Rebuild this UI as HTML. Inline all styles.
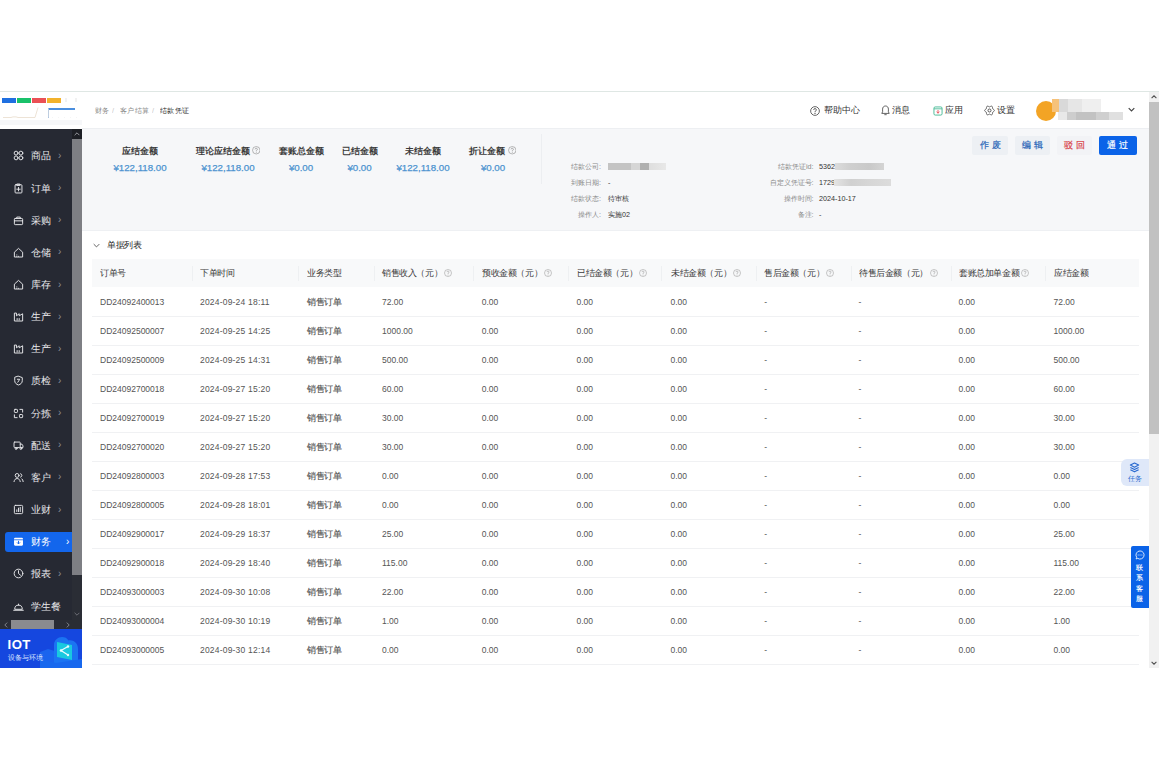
<!DOCTYPE html>
<html><head><meta charset="utf-8">
<style>
*{margin:0;padding:0;box-sizing:border-box}
html,body{width:1159px;height:759px;overflow:hidden;background:#fff;font-family:"Liberation Sans",sans-serif}
.abs{position:absolute}
#app{position:absolute;left:0;top:0;width:1159px;height:668px;overflow:hidden;background:transparent}
#topline{position:absolute;left:0;top:91px;width:1159px;height:1px;background:#dfe7e4}
#logo{position:absolute;left:0;top:92px;width:82px;height:37px;background:#fff}
#side{position:absolute;left:0;top:129px;width:82px;height:500px;background:#262933;overflow:hidden}
#sbtrack{position:absolute;left:72px;top:0;width:10px;height:491px;background:#2a2d35}
#hdr{position:absolute;left:82px;top:92px;width:1067px;height:37px;background:#fff;border-bottom:1px solid #edeff2}
#sum{position:absolute;left:82px;top:129px;width:1067px;height:102px;background:#f6f7f9;border-bottom:1px solid #eef0f3}
#vscroll{position:absolute;left:1149px;top:92px;width:10px;height:576px;background:#f1f1f1}
.th{position:absolute;top:9px;font-size:9px;transform:scale(.955);transform-origin:0 50%;color:#383838;white-space:nowrap;line-height:10px}
.sep{position:absolute;top:7px;width:1px;height:15px;background:#eef0f2}
#thead{position:absolute;left:92.4px;top:258.6px;width:1046.6px;height:28.6px;background:#f8f9fa}
#thead .th, #thead .sep{margin-left:-92.4px}
#thead svg{margin-left:-92.4px;margin-top:-258.6px}
.tr{position:absolute;left:92.4px;width:1046.6px;height:30px;border-bottom:1px solid #f0f1f3}
.td{position:absolute;margin-left:-92.4px;top:10px;font-size:8.5px;color:#555;white-space:nowrap;line-height:10px}
.si{position:absolute;left:0;width:72px;height:20px;color:#e6e7ea;font-size:9.8px}
.si.act{left:5px;width:67px;background:#1366ec;border-radius:3px 0 0 3px;color:#fff}
.st{position:absolute;top:4.5px;line-height:12px;white-space:nowrap}
.si.act .st{margin-left:-5px}
.chev{position:absolute;top:4px;font-size:10px;color:#8a8d95;line-height:12px}
.si.act .chev{color:#fff;margin-left:-5px}
.ic{position:absolute;top:4.5px;color:#e6e7ea}
.si.act .ic{margin-left:-5px;color:#fff}
.lbl{position:absolute;font-size:7.2px;color:#8a8a8a;white-space:nowrap;line-height:9px;text-align:right}
.val{position:absolute;font-size:7.2px;color:#333;white-space:nowrap;line-height:9px}
.blur{position:absolute;background:#d0d0d0}
.btn{position:absolute;top:7px;height:19px;font-size:8.6px;line-height:19px;text-align:center;letter-spacing:3px;text-indent:3px;border-radius:2px;-webkit-text-stroke:.2px currentColor}
.sumt{position:absolute;top:17.2px;font-size:8.5px;font-weight:bold;color:#3a3a3a;white-space:nowrap;line-height:10px;transform:translateX(-50%)}
.sumv{position:absolute;top:33px;font-size:9.7px;color:#4d93d0;-webkit-text-stroke:.25px #4d93d0;white-space:nowrap;line-height:11px;transform:translateX(-50%)}
.bc{position:absolute;top:14px;font-size:8px;transform:scale(.92);transform-origin:0 50%;line-height:9px;white-space:nowrap}
.hi{position:absolute;top:13px;font-size:8.9px;color:#333;white-space:nowrap;line-height:10px}
</style></head><body>
<div id="topline"></div><div id="app">
  <div id="logo">
    <i class="abs" style="left:2px;top:6px;width:14px;height:5px;background:#1f6fe0"></i>
    <i class="abs" style="left:17px;top:6px;width:14px;height:5px;background:#19c16a"></i>
    <i class="abs" style="left:32px;top:6px;width:13.5px;height:5px;background:#ea5055"></i>
    <i class="abs" style="left:46.5px;top:6px;width:14px;height:5px;background:#f2b22c"></i>
    <i class="abs" style="left:48px;top:15.5px;width:27px;height:2px;background:#4a8ede"></i>
    <i class="abs" style="left:48px;top:15.5px;width:1px;height:10px;background:#9ab8e0"></i>
    <svg class="abs" style="left:0;top:0" width="82" height="30" viewBox="0 0 82 30"><path d="M3 25.5h8l2-.6h3l2 .6h17l3-10" fill="none" stroke="#e8dccb" stroke-width=".8"/><path d="M48.5 17v8.5" stroke="#c9d3e0" stroke-width=".8"/><path d="M52 25.5h26" stroke="#eeeeee" stroke-width=".6" stroke-dasharray="1 5"/><path d="M66 6v4M76 6v4" stroke="#e3e3e3" stroke-width="1"/></svg>
    <i class="abs" style="left:0;top:28px;width:82px;height:5px;background:#f6f7f9"></i>
  </div>
  <div id="side">
    <div id="sbtrack">
      <i class="abs" style="left:0;top:0;width:10px;height:10px;background:#1d1f25"></i>
      <i class="abs" style="left:0;top:10px;width:10px;height:436px;background:#7e7f84"></i>
      <svg class="abs" style="left:2px;top:3px" width="6" height="4" viewBox="0 0 10 6"><path d="M1 5l4-4 4 4" fill="none" stroke="#9a9ca2" stroke-width="1.6"/></svg>
      <svg class="abs" style="left:2px;top:483px" width="6" height="4" viewBox="0 0 10 6"><path d="M1 1l4 4 4-4" fill="none" stroke="#6f7178" stroke-width="1.6"/></svg>
    </div>
    <div class="si" style="top:16.900000000000006px"><svg class="ic" style="left:13px" width="11" height="11" viewBox="0 0 16 16"><g fill="none" stroke="currentColor" stroke-width="1.4" stroke-linecap="round" stroke-linejoin="round"><circle cx="4.5" cy="4.5" r="2.8"/><circle cx="11.5" cy="4.5" r="2.8"/><circle cx="4.5" cy="11.5" r="2.8"/><circle cx="11.5" cy="11.5" r="2.8"/></g></svg><span class="st" style="left:31px">商品</span><span class="chev" style="left:58px">›</span></div><div class="si" style="top:49.05000000000001px"><svg class="ic" style="left:13px" width="11" height="11" viewBox="0 0 16 16"><g fill="none" stroke="currentColor" stroke-width="1.4" stroke-linecap="round" stroke-linejoin="round"><rect x="3" y="2.5" width="10" height="12" rx="1.2"/><path d="M6 1.5h4v2H6z"/><path d="M8 6.5v5M5.5 9h5"/></g></svg><span class="st" style="left:31px">订单</span><span class="chev" style="left:58px">›</span></div><div class="si" style="top:81.19999999999999px"><svg class="ic" style="left:13px" width="11" height="11" viewBox="0 0 16 16"><g fill="none" stroke="currentColor" stroke-width="1.4" stroke-linecap="round" stroke-linejoin="round"><rect x="2" y="5" width="12" height="9" rx="1.2"/><path d="M5.5 5V3h5v2M2 8.5h12"/></g></svg><span class="st" style="left:31px">采购</span><span class="chev" style="left:58px">›</span></div><div class="si" style="top:113.35px"><svg class="ic" style="left:13px" width="11" height="11" viewBox="0 0 16 16"><g fill="none" stroke="currentColor" stroke-width="1.4" stroke-linecap="round" stroke-linejoin="round"><path d="M2 14V7.5L8 2l6 5.5V14z"/><path d="M5.5 11.5v.1M5.5 13.5v.1M8 13.5v.1"/></g></svg><span class="st" style="left:31px">仓储</span><span class="chev" style="left:58px">›</span></div><div class="si" style="top:145.5px"><svg class="ic" style="left:13px" width="11" height="11" viewBox="0 0 16 16"><g fill="none" stroke="currentColor" stroke-width="1.4" stroke-linecap="round" stroke-linejoin="round"><path d="M2 14V7.5L8 2l6 5.5V14z"/><path d="M5.5 11.5v.1M5.5 13.5v.1M8 13.5v.1"/></g></svg><span class="st" style="left:31px">库存</span><span class="chev" style="left:58px">›</span></div><div class="si" style="top:177.64999999999998px"><svg class="ic" style="left:13px" width="11" height="11" viewBox="0 0 16 16"><g fill="none" stroke="currentColor" stroke-width="1.4" stroke-linecap="round" stroke-linejoin="round"><path d="M2 14V3h3v4l4-3v3l5-3v10z"/><path d="M6 11v2M9 11v2"/></g></svg><span class="st" style="left:31px">生产</span><span class="chev" style="left:58px">›</span></div><div class="si" style="top:209.79999999999995px"><svg class="ic" style="left:13px" width="11" height="11" viewBox="0 0 16 16"><g fill="none" stroke="currentColor" stroke-width="1.4" stroke-linecap="round" stroke-linejoin="round"><path d="M2 14V3h3v4l4-3v3l5-3v10z"/><path d="M6 11v2M9 11v2"/></g></svg><span class="st" style="left:31px">生产</span><span class="chev" style="left:58px">›</span></div><div class="si" style="top:241.95px"><svg class="ic" style="left:13px" width="11" height="11" viewBox="0 0 16 16"><g fill="none" stroke="currentColor" stroke-width="1.4" stroke-linecap="round" stroke-linejoin="round"><path d="M8 1.8l5.5 2v4.5c0 3.2-2.4 5.3-5.5 6.2C4.9 13.6 2.5 11.5 2.5 8.3V3.8z"/><path d="M6.3 6.2h3.5L7 10.5"/></g></svg><span class="st" style="left:31px">质检</span><span class="chev" style="left:58px">›</span></div><div class="si" style="top:274.1px"><svg class="ic" style="left:13px" width="11" height="11" viewBox="0 0 16 16"><g fill="none" stroke="currentColor" stroke-width="1.4" stroke-linecap="round" stroke-linejoin="round"><rect x="2" y="2" width="4.5" height="4.5" rx="1"/><rect x="9.5" y="9.5" width="4.5" height="4.5" rx="1"/><path d="M2 10v4h4M14 6V2h-4"/></g></svg><span class="st" style="left:31px">分拣</span><span class="chev" style="left:58px">›</span></div><div class="si" style="top:306.25px"><svg class="ic" style="left:13px" width="11" height="11" viewBox="0 0 16 16"><g fill="none" stroke="currentColor" stroke-width="1.4" stroke-linecap="round" stroke-linejoin="round"><rect x="1.5" y="3" width="9" height="8" rx="1"/><path d="M10.5 6h2.5l1.5 2.5V11h-4"/><circle cx="4.5" cy="12.5" r="1.3"/><circle cx="11.5" cy="12.5" r="1.3"/></g></svg><span class="st" style="left:31px">配送</span><span class="chev" style="left:58px">›</span></div><div class="si" style="top:338.4px"><svg class="ic" style="left:13px" width="11" height="11" viewBox="0 0 16 16"><g fill="none" stroke="currentColor" stroke-width="1.4" stroke-linecap="round" stroke-linejoin="round"><circle cx="6" cy="5" r="2.8"/><path d="M1.5 14c.5-3 2.2-4.5 4.5-4.5s4 1.5 4.5 4.5"/><path d="M11 2.5a2.6 2.6 0 0 1 0 5M13 10c1 .8 1.6 2.2 1.8 4"/></g></svg><span class="st" style="left:31px">客户</span><span class="chev" style="left:58px">›</span></div><div class="si" style="top:370.54999999999995px"><svg class="ic" style="left:13px" width="11" height="11" viewBox="0 0 16 16"><g fill="none" stroke="currentColor" stroke-width="1.4" stroke-linecap="round" stroke-linejoin="round"><rect x="2" y="2" width="12" height="12" rx="1.5"/><path d="M5.5 11V8.5M8 11V6M10.5 11V5"/></g></svg><span class="st" style="left:31px">业财</span><span class="chev" style="left:58px">›</span></div><div class="si act" style="top:402.69999999999993px"><svg class="ic" style="left:13px" width="11" height="11" viewBox="0 0 16 16"><g><rect x="1.5" y="2.5" width="13" height="11.5" rx="1.5" fill="#fff"/><path d="M1.5 5.5h13" stroke="#1366ec" stroke-width="1.2"/><path d="M8 7v4.5M5.8 9.3L8 11.5l2.2-2.2" fill="none" stroke="#1366ec" stroke-width="1.4"/></g></svg><span class="st" style="left:31px">财务</span><span class="chev" style="left:66px">›</span></div><div class="si" style="top:434.85px"><svg class="ic" style="left:13px" width="11" height="11" viewBox="0 0 16 16"><g fill="none" stroke="currentColor" stroke-width="1.4" stroke-linecap="round" stroke-linejoin="round"><circle cx="8" cy="8" r="6.3"/><path d="M8 4v4l3 2.5"/></g></svg><span class="st" style="left:31px">报表</span><span class="chev" style="left:58px">›</span></div><div class="si" style="top:467.0px"><svg class="ic" style="left:13px" width="11" height="11" viewBox="0 0 16 16"><g fill="none" stroke="currentColor" stroke-width="1.4" stroke-linecap="round" stroke-linejoin="round"><path d="M2.5 11.5a5.5 5.5 0 0 1 11 0z"/><path d="M1 13.5h14M8 4.5v1.5"/></g></svg><span class="st" style="left:31px">学生餐</span></div>
    <i class="abs" style="left:0;top:491px;width:82px;height:10px;background:#2a2d35"></i>
    <i class="abs" style="left:11px;top:491px;width:43px;height:9px;background:#8a8b8f"></i>
    <svg class="abs" style="left:3.5px;top:493px" width="4" height="6" viewBox="0 0 6 10"><path d="M5 1L1 5l4 4" fill="none" stroke="#8a8d94" stroke-width="1.5"/></svg>
    <svg class="abs" style="left:66px;top:493px" width="4" height="6" viewBox="0 0 6 10"><path d="M1 1l4 4-4 4" fill="none" stroke="#8a8d94" stroke-width="1.5"/></svg>
  </div>
  <div id="iot" class="abs" style="left:0;top:629px;width:82px;height:38.5px;background:#1547df;overflow:hidden">
    <svg class="abs" style="left:0;top:0" width="82" height="39" viewBox="0 0 82 39">
      <path d="M40 39V23l8-3 10 3 4-2v18z" fill="#1a64ee"/>
      <path d="M54 39V16c0-5 4-8 8-8 3 0 5 1 6.5 3.5 2-.5 5 0 7 2 2 2 2.5 4.5 2.5 6.5V39z" fill="#1b74f2"/>
      <path d="M40 30l16 4 26-4v9H40z" fill="#1768ee"/>
      <path d="M57 13l15 3v15l-15-3z" fill="#19c9e0"/>
      <g fill="none" stroke="#eafcff" stroke-width="1.3"><path d="M61 21.5l7-4M61 21.5l7 4.5"/></g>
      <circle cx="61" cy="21.5" r="1.3" fill="#eafcff"/><circle cx="68" cy="17.5" r="1.2" fill="#eafcff"/><circle cx="68" cy="26" r="1.2" fill="#eafcff"/>
    </svg>
    <span class="abs" style="left:7.6px;top:8.5px;font-size:13.2px;font-weight:bold;color:#fff;line-height:13px;letter-spacing:.4px">IOT</span>
    <span class="abs" style="left:7.8px;top:25px;font-size:6.9px;color:#dfe8ff;line-height:8px;white-space:nowrap">设备与环境</span>
  </div>
  <div id="hdr">
    <span class="bc" style="left:12.6px;color:#8a8a8a">财务</span><span class="bc" style="left:30px;color:#c8c8c8">/</span><span class="bc" style="left:37.8px;color:#8a8a8a">客户结算</span><span class="bc" style="left:69.5px;color:#c8c8c8">/</span><span class="bc" style="left:77.6px;color:#2a2a2a">结款凭证</span>
    <span class="hi" style="left:742px">帮助中心</span>
    <span class="hi" style="left:810px">消息</span>
    <span class="hi" style="left:863px">应用</span>
    <span class="hi" style="left:914.5px">设置</span>

    <svg class="abs" style="left:727.5px;top:13.5px" width="10" height="10" viewBox="0 0 16 16"><circle cx="8" cy="8" r="7" fill="none" stroke="#444" stroke-width="1.3"/><path d="M5.9 6.2a2.1 2.1 0 1 1 2.8 2c-.5.2-.7.5-.7 1v.6" fill="none" stroke="#444" stroke-width="1.4"/><circle cx="8" cy="11.8" r=".9" fill="#444"/></svg>
    <svg class="abs" style="left:798.5px;top:13px" width="9" height="11" viewBox="0 0 14 17"><path d="M7 1.5c-2.8 0-4.5 2-4.5 4.8v4.2L1.2 13h11.6l-1.3-2.5V6.3C11.5 3.5 9.8 1.5 7 1.5z" fill="none" stroke="#444" stroke-width="1.3" stroke-linejoin="round"/><path d="M5.2 15h3.6" stroke="#444" stroke-width="1.3"/></svg>
    <svg class="abs" style="left:850.5px;top:13.5px" width="10" height="10" viewBox="0 0 16 16"><rect x="1.5" y="1.5" width="13" height="13" rx="2" fill="none" stroke="#3bb58f" stroke-width="1.4"/><path d="M1.5 4.5h13" stroke="#3bb58f" stroke-width="1.3"/><path d="M8 6.5v5M5.7 9.3L8 11.5l2.3-2.2" fill="none" stroke="#e8505a" stroke-width="1.5"/></svg>
    <svg class="abs" style="left:901.5px;top:13px" width="11" height="11" viewBox="0 0 16 16"><path d="M15.10 8.00 L14.95 8.61 L14.55 9.15 L13.99 9.60 L13.40 9.97 L12.91 10.29 L12.59 10.65 L12.44 11.11 L12.40 11.70 L12.38 12.38 L12.27 13.09 L12.00 13.72 L11.55 14.15 L10.95 14.33 L10.27 14.25 L9.60 13.99 L9.00 13.66 L8.47 13.40 L8.00 13.30 L7.53 13.40 L7.00 13.66 L6.40 13.99 L5.73 14.25 L5.05 14.33 L4.45 14.15 L4.00 13.72 L3.73 13.09 L3.62 12.38 L3.60 11.70 L3.56 11.11 L3.41 10.65 L3.09 10.29 L2.60 9.97 L2.01 9.60 L1.45 9.15 L1.05 8.61 L0.90 8.00 L1.05 7.39 L1.45 6.85 L2.01 6.40 L2.60 6.03 L3.09 5.71 L3.41 5.35 L3.56 4.89 L3.60 4.30 L3.62 3.62 L3.73 2.91 L4.00 2.28 L4.45 1.85 L5.05 1.67 L5.73 1.75 L6.40 2.01 L7.00 2.34 L7.53 2.60 L8.00 2.70 L8.47 2.60 L9.00 2.34 L9.60 2.01 L10.27 1.75 L10.95 1.67 L11.55 1.85 L12.00 2.28 L12.27 2.91 L12.38 3.62 L12.40 4.30 L12.44 4.89 L12.59 5.35 L12.91 5.71 L13.40 6.03 L13.99 6.40 L14.55 6.85 L14.95 7.39 L15.10 8.00Z" fill="none" stroke="#444" stroke-width="1.2" stroke-linejoin="round"/><circle cx="8" cy="8" r="2.2" fill="none" stroke="#444" stroke-width="1.3"/></svg>
    <svg class="abs" style="left:1045.5px;top:15px" width="7" height="5" viewBox="0 0 10 6"><path d="M1 1l4 4 4-4" fill="none" stroke="#444" stroke-width="1.7"/></svg>
    <i class="abs" style="left:954px;top:9px;width:20px;height:20px;border-radius:50%;background:#f3a425"></i>
    <i class="abs" style="left:969.5px;top:7px;width:49.5px;height:13px;background:linear-gradient(90deg,#f6c27a 0,#f6c27a 14%,#d9d9d9 14%,#d9d9d9 32%,#e6e6e6 32%,#e6e6e6 62%,#efefef 62%,#efefef 100%)"></i>
    <i class="abs" style="left:976px;top:19.5px;width:65px;height:8px;background:linear-gradient(90deg,#e8e8e8 0,#e8e8e8 14%,#cdcdcd 14%,#cdcdcd 28%,#c2c2c2 28%,#c2c2c2 58%,#cfcfcf 58%,#cfcfcf 78%,#e0e0e0 78%)"></i>
  </div>
  <div id="sum">
    <span class="sumt" style="left:58px">应结金额</span><span class="sumv" style="left:58px">¥122,118.00</span>
    <span class="sumt" style="left:141px">理论应结金额</span><span class="sumv" style="left:146px">¥122,118.00</span>
    <span class="sumt" style="left:219px">套账总金额</span><span class="sumv" style="left:219px">¥0.00</span>
    <span class="sumt" style="left:278px">已结金额</span><span class="sumv" style="left:277.5px">¥0.00</span>
    <span class="sumt" style="left:341px">未结金额</span><span class="sumv" style="left:341px">¥122,118.00</span>
    <span class="sumt" style="left:405px">折让金额</span><span class="sumv" style="left:411px">¥0.00</span>
    
    <span class="lbl" style="right:548px;top:33px">结款公司:</span>
    <span class="lbl" style="right:548px;top:49px">到账日期:</span>
    <span class="lbl" style="right:548px;top:65px">结款状态:</span>
    <span class="lbl" style="right:548px;top:81px">操作人:</span>
    <i class="blur" style="left:526px;top:34px;width:58px;height:7px;background:linear-gradient(90deg,#c4c4c4 0,#c4c4c4 40%,#d6d6d6 40%,#d6d6d6 55%,#b0b0b0 55%,#b0b0b0 70%,#dedede 70%,#e8e8e8 100%)"></i>
    <span class="val" style="left:526px;top:49px">-</span>
    <span class="val" style="left:526px;top:65px">待审核</span>
    <span class="val" style="left:526px;top:81px">实施02</span>
    <span class="lbl" style="right:335.5px;top:33px">结款凭证id:</span>
    <span class="lbl" style="right:335.5px;top:49px">自定义凭证号:</span>
    <span class="lbl" style="right:335.5px;top:65px">操作时间:</span>
    <span class="lbl" style="right:335.5px;top:81px">备注:</span>
    <span class="val" style="left:737px;top:33px">5362</span>
    <i class="blur" style="left:753px;top:34px;width:49px;height:7px;background:linear-gradient(90deg,#dcdcdc,#cfcfcf 30%,#c9c9c9 70%,#d4d4d4)"></i>
    <span class="val" style="left:737px;top:49px">1729</span>
    <i class="blur" style="left:752px;top:50px;width:57px;height:7px;background:linear-gradient(90deg,#e4e4e4,#d0d0d0 30%,#d6d6d6 60%,#dcdcdc)"></i>
    <span class="val" style="left:737px;top:65px">2024-10-17</span>
    <span class="val" style="left:737px;top:81px">-</span>

    <svg class="abs" style="left:169.5px;top:17px" width="8.5" height="8.5" viewBox="0 0 16 16"><circle cx="8" cy="8" r="7" fill="none" stroke="#888" stroke-width="1.1"/><path d="M5.9 6.3a2.1 2.1 0 1 1 2.8 2c-.5.2-.7.5-.7 1v.7" fill="none" stroke="#888" stroke-width="1.2"/><circle cx="8" cy="11.9" r=".85" fill="#888"/></svg>
    <svg class="abs" style="left:425.5px;top:17px" width="8.5" height="8.5" viewBox="0 0 16 16"><circle cx="8" cy="8" r="7" fill="none" stroke="#888" stroke-width="1.1"/><path d="M5.9 6.3a2.1 2.1 0 1 1 2.8 2c-.5.2-.7.5-.7 1v.7" fill="none" stroke="#888" stroke-width="1.2"/><circle cx="8" cy="11.9" r=".85" fill="#888"/></svg>
    <i class="abs" style="left:459px;top:5px;width:1px;height:50px;background:#eceef1"></i>
    <span class="btn" style="left:890px;width:36px;background:#edf0f4;color:#2a66b8">作废</span>
    <span class="btn" style="left:933px;width:35px;background:#edf0f4;color:#2a66b8">编辑</span>
    <span class="btn" style="left:975px;width:35px;background:#f2f3f6;color:#d9474c">驳回</span>
    <span class="btn" style="left:1016.5px;width:38.5px;background:#0b63e8;color:#fff">通过</span>
  </div>
  <div id="thead"><span class="th" style="left:100px">订单号</span><span class="th" style="left:200px">下单时间</span><span class="th" style="left:306.5px">业务类型</span><span class="th" style="left:382px">销售收入（元）</span><span class="th" style="left:481.7px">预收金额（元）</span><span class="th" style="left:576.5px">已结金额（元）</span><span class="th" style="left:670.5px">未结金额（元）</span><span class="th" style="left:764.3px">售后金额（元）</span><span class="th" style="left:858.5px">待售后金额（元）</span><span class="th" style="left:958.5px">套账总加单金额</span><span class="th" style="left:1053.5px">应结金额</span><i class="sep" style="left:192.4px"></i><i class="sep" style="left:298px"></i><i class="sep" style="left:373.8px"></i><i class="sep" style="left:473px"></i><i class="sep" style="left:568px"></i><i class="sep" style="left:661px"></i><i class="sep" style="left:755.7px"></i><i class="sep" style="left:850.6px"></i><i class="sep" style="left:950.7px"></i><i class="sep" style="left:1044.7px"></i><svg class="abs" style="left:443.5px;top:268.5px" width="8" height="8" viewBox="0 0 16 16"><circle cx="8" cy="8" r="7" fill="none" stroke="#9a9a9a" stroke-width="1.1"/><path d="M5.9 6.3a2.1 2.1 0 1 1 2.8 2c-.5.2-.7.5-.7 1v.7" fill="none" stroke="#9a9a9a" stroke-width="1.2"/><circle cx="8" cy="11.9" r=".85" fill="#9a9a9a"/></svg><svg class="abs" style="left:544px;top:268.5px" width="8" height="8" viewBox="0 0 16 16"><circle cx="8" cy="8" r="7" fill="none" stroke="#9a9a9a" stroke-width="1.1"/><path d="M5.9 6.3a2.1 2.1 0 1 1 2.8 2c-.5.2-.7.5-.7 1v.7" fill="none" stroke="#9a9a9a" stroke-width="1.2"/><circle cx="8" cy="11.9" r=".85" fill="#9a9a9a"/></svg><svg class="abs" style="left:638.5px;top:268.5px" width="8" height="8" viewBox="0 0 16 16"><circle cx="8" cy="8" r="7" fill="none" stroke="#9a9a9a" stroke-width="1.1"/><path d="M5.9 6.3a2.1 2.1 0 1 1 2.8 2c-.5.2-.7.5-.7 1v.7" fill="none" stroke="#9a9a9a" stroke-width="1.2"/><circle cx="8" cy="11.9" r=".85" fill="#9a9a9a"/></svg><svg class="abs" style="left:733px;top:268.5px" width="8" height="8" viewBox="0 0 16 16"><circle cx="8" cy="8" r="7" fill="none" stroke="#9a9a9a" stroke-width="1.1"/><path d="M5.9 6.3a2.1 2.1 0 1 1 2.8 2c-.5.2-.7.5-.7 1v.7" fill="none" stroke="#9a9a9a" stroke-width="1.2"/><circle cx="8" cy="11.9" r=".85" fill="#9a9a9a"/></svg><svg class="abs" style="left:826px;top:268.5px" width="8" height="8" viewBox="0 0 16 16"><circle cx="8" cy="8" r="7" fill="none" stroke="#9a9a9a" stroke-width="1.1"/><path d="M5.9 6.3a2.1 2.1 0 1 1 2.8 2c-.5.2-.7.5-.7 1v.7" fill="none" stroke="#9a9a9a" stroke-width="1.2"/><circle cx="8" cy="11.9" r=".85" fill="#9a9a9a"/></svg><svg class="abs" style="left:929.5px;top:268.5px" width="8" height="8" viewBox="0 0 16 16"><circle cx="8" cy="8" r="7" fill="none" stroke="#9a9a9a" stroke-width="1.1"/><path d="M5.9 6.3a2.1 2.1 0 1 1 2.8 2c-.5.2-.7.5-.7 1v.7" fill="none" stroke="#9a9a9a" stroke-width="1.2"/><circle cx="8" cy="11.9" r=".85" fill="#9a9a9a"/></svg><svg class="abs" style="left:1021px;top:268.5px" width="8" height="8" viewBox="0 0 16 16"><circle cx="8" cy="8" r="7" fill="none" stroke="#9a9a9a" stroke-width="1.1"/><path d="M5.9 6.3a2.1 2.1 0 1 1 2.8 2c-.5.2-.7.5-.7 1v.7" fill="none" stroke="#9a9a9a" stroke-width="1.2"/><circle cx="8" cy="11.9" r=".85" fill="#9a9a9a"/></svg></div>
  <svg class="abs" style="left:92.5px;top:242.5px" width="7" height="5" viewBox="0 0 10 6"><path d="M1 1l4 4 4-4" fill="none" stroke="#555" stroke-width="1.3"/></svg>
  <span class="abs" style="left:106.8px;top:240px;font-size:9px;transform:scale(.95);transform-origin:0 50%;color:#2a2a2a;line-height:10px">单据列表</span>
  <div class="tr" style="top:287px"><span class="td" style="left:100px;">DD24092400013</span><span class="td" style="left:200px;letter-spacing:.2px;">2024-09-24 18:11</span><span class="td" style="left:306.5px;font-size:9px;transform:scale(.955);transform-origin:0 50%;-webkit-text-stroke:.15px #555;">销售订单</span><span class="td" style="left:382px;">72.00</span><span class="td" style="left:481.7px;">0.00</span><span class="td" style="left:576.5px;">0.00</span><span class="td" style="left:670.5px;">0.00</span><span class="td" style="left:764.3px;">-</span><span class="td" style="left:858.5px;">-</span><span class="td" style="left:958.5px;">0.00</span><span class="td" style="left:1053.5px;">72.00</span></div><div class="tr" style="top:316px"><span class="td" style="left:100px;">DD24092500007</span><span class="td" style="left:200px;letter-spacing:.2px;">2024-09-25 14:25</span><span class="td" style="left:306.5px;font-size:9px;transform:scale(.955);transform-origin:0 50%;-webkit-text-stroke:.15px #555;">销售订单</span><span class="td" style="left:382px;">1000.00</span><span class="td" style="left:481.7px;">0.00</span><span class="td" style="left:576.5px;">0.00</span><span class="td" style="left:670.5px;">0.00</span><span class="td" style="left:764.3px;">-</span><span class="td" style="left:858.5px;">-</span><span class="td" style="left:958.5px;">0.00</span><span class="td" style="left:1053.5px;">1000.00</span></div><div class="tr" style="top:345px"><span class="td" style="left:100px;">DD24092500009</span><span class="td" style="left:200px;letter-spacing:.2px;">2024-09-25 14:31</span><span class="td" style="left:306.5px;font-size:9px;transform:scale(.955);transform-origin:0 50%;-webkit-text-stroke:.15px #555;">销售订单</span><span class="td" style="left:382px;">500.00</span><span class="td" style="left:481.7px;">0.00</span><span class="td" style="left:576.5px;">0.00</span><span class="td" style="left:670.5px;">0.00</span><span class="td" style="left:764.3px;">-</span><span class="td" style="left:858.5px;">-</span><span class="td" style="left:958.5px;">0.00</span><span class="td" style="left:1053.5px;">500.00</span></div><div class="tr" style="top:374px"><span class="td" style="left:100px;">DD24092700018</span><span class="td" style="left:200px;letter-spacing:.2px;">2024-09-27 15:20</span><span class="td" style="left:306.5px;font-size:9px;transform:scale(.955);transform-origin:0 50%;-webkit-text-stroke:.15px #555;">销售订单</span><span class="td" style="left:382px;">60.00</span><span class="td" style="left:481.7px;">0.00</span><span class="td" style="left:576.5px;">0.00</span><span class="td" style="left:670.5px;">0.00</span><span class="td" style="left:764.3px;">-</span><span class="td" style="left:858.5px;">-</span><span class="td" style="left:958.5px;">0.00</span><span class="td" style="left:1053.5px;">60.00</span></div><div class="tr" style="top:403px"><span class="td" style="left:100px;">DD24092700019</span><span class="td" style="left:200px;letter-spacing:.2px;">2024-09-27 15:20</span><span class="td" style="left:306.5px;font-size:9px;transform:scale(.955);transform-origin:0 50%;-webkit-text-stroke:.15px #555;">销售订单</span><span class="td" style="left:382px;">30.00</span><span class="td" style="left:481.7px;">0.00</span><span class="td" style="left:576.5px;">0.00</span><span class="td" style="left:670.5px;">0.00</span><span class="td" style="left:764.3px;">-</span><span class="td" style="left:858.5px;">-</span><span class="td" style="left:958.5px;">0.00</span><span class="td" style="left:1053.5px;">30.00</span></div><div class="tr" style="top:432px"><span class="td" style="left:100px;">DD24092700020</span><span class="td" style="left:200px;letter-spacing:.2px;">2024-09-27 15:20</span><span class="td" style="left:306.5px;font-size:9px;transform:scale(.955);transform-origin:0 50%;-webkit-text-stroke:.15px #555;">销售订单</span><span class="td" style="left:382px;">30.00</span><span class="td" style="left:481.7px;">0.00</span><span class="td" style="left:576.5px;">0.00</span><span class="td" style="left:670.5px;">0.00</span><span class="td" style="left:764.3px;">-</span><span class="td" style="left:858.5px;">-</span><span class="td" style="left:958.5px;">0.00</span><span class="td" style="left:1053.5px;">30.00</span></div><div class="tr" style="top:461px"><span class="td" style="left:100px;">DD24092800003</span><span class="td" style="left:200px;letter-spacing:.2px;">2024-09-28 17:53</span><span class="td" style="left:306.5px;font-size:9px;transform:scale(.955);transform-origin:0 50%;-webkit-text-stroke:.15px #555;">销售订单</span><span class="td" style="left:382px;">0.00</span><span class="td" style="left:481.7px;">0.00</span><span class="td" style="left:576.5px;">0.00</span><span class="td" style="left:670.5px;">0.00</span><span class="td" style="left:764.3px;">-</span><span class="td" style="left:858.5px;">-</span><span class="td" style="left:958.5px;">0.00</span><span class="td" style="left:1053.5px;">0.00</span></div><div class="tr" style="top:490px"><span class="td" style="left:100px;">DD24092800005</span><span class="td" style="left:200px;letter-spacing:.2px;">2024-09-28 18:01</span><span class="td" style="left:306.5px;font-size:9px;transform:scale(.955);transform-origin:0 50%;-webkit-text-stroke:.15px #555;">销售订单</span><span class="td" style="left:382px;">0.00</span><span class="td" style="left:481.7px;">0.00</span><span class="td" style="left:576.5px;">0.00</span><span class="td" style="left:670.5px;">0.00</span><span class="td" style="left:764.3px;">-</span><span class="td" style="left:858.5px;">-</span><span class="td" style="left:958.5px;">0.00</span><span class="td" style="left:1053.5px;">0.00</span></div><div class="tr" style="top:519px"><span class="td" style="left:100px;">DD24092900017</span><span class="td" style="left:200px;letter-spacing:.2px;">2024-09-29 18:37</span><span class="td" style="left:306.5px;font-size:9px;transform:scale(.955);transform-origin:0 50%;-webkit-text-stroke:.15px #555;">销售订单</span><span class="td" style="left:382px;">25.00</span><span class="td" style="left:481.7px;">0.00</span><span class="td" style="left:576.5px;">0.00</span><span class="td" style="left:670.5px;">0.00</span><span class="td" style="left:764.3px;">-</span><span class="td" style="left:858.5px;">-</span><span class="td" style="left:958.5px;">0.00</span><span class="td" style="left:1053.5px;">25.00</span></div><div class="tr" style="top:548px"><span class="td" style="left:100px;">DD24092900018</span><span class="td" style="left:200px;letter-spacing:.2px;">2024-09-29 18:40</span><span class="td" style="left:306.5px;font-size:9px;transform:scale(.955);transform-origin:0 50%;-webkit-text-stroke:.15px #555;">销售订单</span><span class="td" style="left:382px;">115.00</span><span class="td" style="left:481.7px;">0.00</span><span class="td" style="left:576.5px;">0.00</span><span class="td" style="left:670.5px;">0.00</span><span class="td" style="left:764.3px;">-</span><span class="td" style="left:858.5px;">-</span><span class="td" style="left:958.5px;">0.00</span><span class="td" style="left:1053.5px;">115.00</span></div><div class="tr" style="top:577px"><span class="td" style="left:100px;">DD24093000003</span><span class="td" style="left:200px;letter-spacing:.2px;">2024-09-30 10:08</span><span class="td" style="left:306.5px;font-size:9px;transform:scale(.955);transform-origin:0 50%;-webkit-text-stroke:.15px #555;">销售订单</span><span class="td" style="left:382px;">22.00</span><span class="td" style="left:481.7px;">0.00</span><span class="td" style="left:576.5px;">0.00</span><span class="td" style="left:670.5px;">0.00</span><span class="td" style="left:764.3px;">-</span><span class="td" style="left:858.5px;">-</span><span class="td" style="left:958.5px;">0.00</span><span class="td" style="left:1053.5px;">22.00</span></div><div class="tr" style="top:606px"><span class="td" style="left:100px;">DD24093000004</span><span class="td" style="left:200px;letter-spacing:.2px;">2024-09-30 10:19</span><span class="td" style="left:306.5px;font-size:9px;transform:scale(.955);transform-origin:0 50%;-webkit-text-stroke:.15px #555;">销售订单</span><span class="td" style="left:382px;">1.00</span><span class="td" style="left:481.7px;">0.00</span><span class="td" style="left:576.5px;">0.00</span><span class="td" style="left:670.5px;">0.00</span><span class="td" style="left:764.3px;">-</span><span class="td" style="left:858.5px;">-</span><span class="td" style="left:958.5px;">0.00</span><span class="td" style="left:1053.5px;">1.00</span></div><div class="tr" style="top:635px"><span class="td" style="left:100px;">DD24093000005</span><span class="td" style="left:200px;letter-spacing:.2px;">2024-09-30 12:14</span><span class="td" style="left:306.5px;font-size:9px;transform:scale(.955);transform-origin:0 50%;-webkit-text-stroke:.15px #555;">销售订单</span><span class="td" style="left:382px;">0.00</span><span class="td" style="left:481.7px;">0.00</span><span class="td" style="left:576.5px;">0.00</span><span class="td" style="left:670.5px;">0.00</span><span class="td" style="left:764.3px;">-</span><span class="td" style="left:858.5px;">-</span><span class="td" style="left:958.5px;">0.00</span><span class="td" style="left:1053.5px;">0.00</span></div>

  <div class="abs" style="left:1121px;top:459px;width:28px;height:27px;background:#dfe8f9;border-radius:6px 0 0 6px">
    <svg class="abs" style="left:8px;top:2.5px" width="11" height="11" viewBox="0 0 16 16"><path d="M8 1.5L14 4.5 8 7.5 2 4.5z" fill="none" stroke="#2a6ad0" stroke-width="1.7" stroke-linejoin="round"/><path d="M2 8l6 3 6-3M2 11.3l6 3 6-3" fill="none" stroke="#2a6ad0" stroke-width="1.7" stroke-linejoin="round"/></svg>
    <span class="abs" style="left:6.5px;top:16px;font-size:7px;line-height:8px;color:#2f6fd0;white-space:nowrap">任务</span>
  </div>
  <div class="abs" style="left:1130.5px;top:545.5px;width:18.5px;height:62px;background:#0b63e8;border-radius:2px 0 0 2px">
    <svg class="abs" style="left:4px;top:4px" width="10" height="10" viewBox="0 0 16 16"><path d="M8 1.5a6.5 6.5 0 1 1-3.6 11.9L1.8 14.3l.9-2.6A6.5 6.5 0 0 1 8 1.5z" fill="none" stroke="#fff" stroke-width="1.3"/><path d="M5 8h.1M8 8h.1M11 8h.1" stroke="#fff" stroke-width="1.4" stroke-linecap="round"/></svg>
    <span class="abs" style="left:5px;top:17px;width:9px;font-size:7.2px;line-height:10.5px;color:#fff;white-space:normal;word-break:break-all;-webkit-text-stroke:.15px #fff">联系客服</span>
  </div>
  <div id="vscroll">
    <i class="abs" style="left:0;top:10px;width:10px;height:332px;background:#c1c1c1"></i>
    <svg class="abs" style="left:2px;top:2.5px" width="6" height="4" viewBox="0 0 10 6"><path d="M1 5l4-4 4 4" fill="none" stroke="#505050" stroke-width="1.8"/></svg>
    <svg class="abs" style="left:2px;top:568.5px" width="6" height="4" viewBox="0 0 10 6"><path d="M1 1l4 4 4-4" fill="none" stroke="#505050" stroke-width="1.8"/></svg>
  </div>
</div>
</body></html>
